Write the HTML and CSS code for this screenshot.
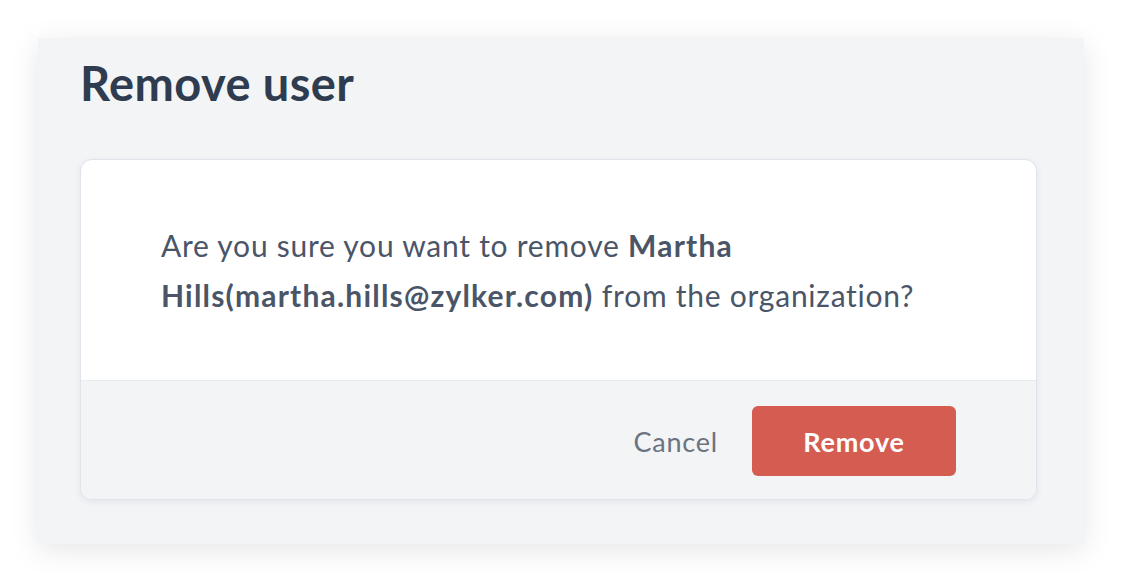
FILE: index.html
```html
<!DOCTYPE html>
<html>
<head>
<meta charset="utf-8">
<link rel="stylesheet" href="styles.css">
</head>
<body>
<div class="panel">
  <h1 class="title">Remove user</h1>
  <div class="card">
    <div class="card-body">
      <p class="message">Are you sure you want to remove <strong>Martha Hills(martha.hills@zylker.com)</strong> from the organization?</p>
    </div>
    <div class="card-footer">
      <button class="btn-cancel">Cancel</button>
      <button class="btn-remove">Remove</button>
    </div>
  </div>
</div>
</body>
</html>
```
FILE: styles.css
```css
html, body {
  margin: 0;
  padding: 0;
  background: #ffffff;
}
body {
  font-family: Lato, "Noto Sans", sans-serif;
  width: 1122px;
  height: 582px;
  overflow: hidden;
}
.panel {
  margin: 38px 0 0 38px;
  width: 1046px;
  height: 506px;
  box-sizing: border-box;
  padding: 17px 47px 0 42px;
  background: #f3f4f6;
  box-shadow: 0 6px 28px rgba(0, 0, 0, 0.10);
}
.title {
  margin: 0 0 48px 0;
  font-size: 47px;
  line-height: 56px;
  font-weight: 700;
  letter-spacing: 0.4px;
  color: #2f3c50;
}
.card {
  background: #ffffff;
  border: 1px solid #dfe4ea;
  border-radius: 12px;
  box-shadow: 0 2px 6px rgba(30, 60, 100, 0.08);
  overflow: hidden;
}
.card-body {
  padding: 60px 80px 60px 80px;
}
.message {
  margin: 0;
  font-size: 30px;
  line-height: 50px;
  letter-spacing: 0.75px;
  color: #4a5568;
  max-width: 790px;
}
.message strong {
  font-weight: 700;
  letter-spacing: 1.2px;
}
.card-footer {
  display: flex;
  justify-content: flex-end;
  align-items: center;
  gap: 34px;
  padding: 25px 80px 23px 80px;
  background: #f3f4f6;
  border-top: 1px solid #e8ebef;
}
.btn-cancel {
  border: none;
  background: none;
  padding: 0;
  font-family: inherit;
  font-size: 27px;
  letter-spacing: 0.8px;
  color: #6b7280;
}
.btn-remove {
  border: none;
  width: 204px;
  height: 70px;
  border-radius: 6px;
  background: #d55c51;
  color: #ffffff;
  font-family: inherit;
  font-size: 27px;
  font-weight: 700;
  letter-spacing: 0.75px;
}
```
